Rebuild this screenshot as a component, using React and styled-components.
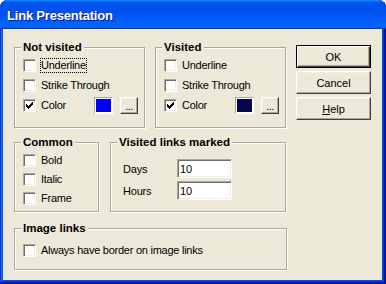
import React from 'react';
import styled, { createGlobalStyle, css } from 'styled-components';

const GlobalStyle = createGlobalStyle`
  html, body { margin: 0; padding: 0; background: #ffffff; }
  body { font-family: "Liberation Sans", Arial, sans-serif; font-size: 11px; color: #000; }
  #root { width: 386px; height: 284px; }
`;

const Window = styled.div`
  width: 386px;
  height: 284px;
  box-sizing: border-box;
  display: flex;
  flex-direction: column;
  border-radius: 8px 8px 0 0;
  overflow: hidden;
  background: #0054e3;
  box-shadow: inset -1px -1px #00138c, inset 1px 1px #0831d9, inset -2px -2px #001ea0,
    inset 2px 2px #166aee, inset -3px -3px #003bda, inset 3px 3px #0855dd;
`;

const TitleBar = styled.div`
  flex: none;
  height: 29px;
  box-sizing: border-box;
  padding: 2px 0 0 7px;
  display: flex;
  align-items: center;
  background: linear-gradient(180deg, #0997ff, #0053ee 8%, #0050ee 40%, #06f 88%, #06f 93%, #005bff 95%, #003dd7 96%, #003dd7);
  color: #fff;
  font-weight: bold;
  font-size: 13px;
  letter-spacing: -0.2px;
  text-shadow: 1px 1px #0f1089;
`;

const Client = styled.div`
  flex: 1;
  margin: 0 4px 4px 3px;
  background: #ece9d8;
  display: flex;
  align-items: flex-start;
  padding: 16px 0 0 11px;
`;

const LeftArea = styled.div`
  display: flex;
  flex-direction: column;
  width: 273px;
  margin-top: 2px;
`;

const Row = styled.div`
  display: flex;
  gap: ${p => p.$gap || 0}px;
  margin-top: ${p => p.$mt || 0}px;
`;

const Group = styled.div`
  position: relative;
  box-sizing: border-box;
  width: ${p => p.$w}px;
  height: ${p => p.$h}px;
  border: 1px solid #aca899;
  box-shadow: inset 1px 1px #fff, 1px 1px #fff;
  padding: ${p => p.$pt}px 6px 0 8px;
`;

const GroupTitle = styled.span`
  position: absolute;
  top: -7px;
  left: 6px;
  padding: 0 2px;
  background: #ece9d8;
  font-weight: bold;
  font-size: 11.5px;
  line-height: 13px;
  white-space: nowrap;
`;

const CheckList = styled.div`
  display: flex;
  flex-direction: column;
  gap: ${p => p.$gap}px;
`;

const CheckRow = styled.div`
  display: flex;
  align-items: center;
  height: 19px;
`;

const Box = styled.span`
  flex: none;
  width: 13px;
  height: 13px;
  box-sizing: border-box;
  border: 1px solid;
  border-color: #aca899 #fff #fff #aca899;
  box-shadow: inset 1px 1px #716f64, inset -1px -1px #f1efe2;
  background: #fff;
  display: flex;
  align-items: center;
  justify-content: center;
`;

const Label = styled.span`
  margin-left: 4px;
  line-height: 13px;
  border: 1px dotted ${p => (p.$focus ? '#000' : 'transparent')};
  letter-spacing: -0.25px;
  white-space: nowrap;
  ${p => p.$grow && css`flex: 1;`}
`;

const Swatch = styled.span`
  flex: none;
  width: 19px;
  height: 17px;
  box-sizing: border-box;
  border: 1px solid;
  border-color: #aca899 #fff #fff #aca899;
  box-shadow: inset 0 0 0 1px #fff;
  background: ${p => p.$color};
`;

const raised = css`
  box-sizing: border-box;
  padding: 0;
  font-family: "Liberation Sans", Arial, sans-serif;
  font-size: 11px;
  color: #000;
  background: #ece9d8;
  border: 1px solid;
  border-color: #fff #404040 #404040 #fff;
  box-shadow: inset -1px -1px #aca899, inset 1px 1px #f1efe2;
`;

const DotsButton = styled.button`
  ${raised};
  flex: none;
  width: 18px;
  height: 17px;
  margin-left: 7px;
  line-height: 13px;
  letter-spacing: -0.5px;
  padding-top: 1px;
`;

const ButtonColumn = styled.div`
  display: flex;
  flex-direction: column;
  gap: 3px;
  margin-left: 9px;
`;

const Button = styled.button`
  ${raised};
  width: 75px;
  height: 23px;
  ${p =>
    p.$default &&
    css`
      border-color: #000;
      box-shadow: inset 1px 1px #fff, inset -1px -1px #404040, inset -2px -2px #aca899;
    `}
`;

const Fields = styled.div`
  display: grid;
  grid-template-columns: 54px 55px;
  row-gap: 3px;
  align-items: center;
  margin-left: 4px;
`;

const FieldLabel = styled.span`
  letter-spacing: -0.2px;
`;

const TextInput = styled.input`
  width: 55px;
  height: 19px;
  box-sizing: border-box;
  border: 1px solid;
  border-color: #aca899 #fff #fff #aca899;
  box-shadow: inset 1px 1px #716f64, inset -1px -1px #f1efe2;
  padding: 0 0 0 2px;
  font-family: "Liberation Sans", Arial, sans-serif;
  font-size: 11px;
  color: #000;
  background: #fff;
  outline: none;
`;

const Check = () => (
  <svg width="7" height="7" viewBox="0 0 7 7" shapeRendering="crispEdges">
    <path d="M0 2h1v1h1v1h1v-1h1v-1h1v-1h1v-1h1v3h-1v1h-1v1h-1v1h-1v1h-1v-1h-1v-1h-1z" fill="#000" />
  </svg>
);

const CheckItem = ({ label, checked, focus, children }) => (
  <CheckRow>
    <Box>{checked && <Check />}</Box>
    <Label $focus={focus} $grow={!!children}>{label}</Label>
    {children}
  </CheckRow>
);

const LinkStateGroup = ({ title, color, focusFirst }) => (
  <Group $w={131} $h={81} $pt={8}>
    <GroupTitle>{title}</GroupTitle>
    <CheckList $gap={1}>
      <CheckItem label="Underline" focus={focusFirst} />
      <CheckItem label="Strike Through" />
      <CheckItem label="Color" checked>
        <Swatch $color={color} />
        <DotsButton>...</DotsButton>
      </CheckItem>
    </CheckList>
  </Group>
);

export default function App() {
  return (
    <>
      <GlobalStyle />
      <Window>
        <TitleBar>Link Presentation</TitleBar>
        <Client>
          <LeftArea>
            <Row $gap={10}>
              <LinkStateGroup title="Not visited" color="#0000f4" focusFirst />
              <LinkStateGroup title="Visited" color="#06064e" />
            </Row>
            <Row $gap={11} $mt={14}>
              <Group $w={85} $h={70} $pt={8}>
                <GroupTitle>Common</GroupTitle>
                <CheckList $gap={0}>
                  <CheckItem label="Bold" />
                  <CheckItem label="Italic" />
                  <CheckItem label="Frame" />
                </CheckList>
              </Group>
              <Group $w={176} $h={70} $pt={16}>
                <GroupTitle>Visited links marked</GroupTitle>
                <Fields>
                  <FieldLabel>Days</FieldLabel>
                  <TextInput defaultValue="10" />
                  <FieldLabel>Hours</FieldLabel>
                  <TextInput defaultValue="10" />
                </Fields>
              </Group>
            </Row>
            <Row $mt={16}>
              <Group $w={273} $h={42} $pt={12}>
                <GroupTitle>Image links</GroupTitle>
                <CheckItem label="Always have border on image links" />
              </Group>
            </Row>
          </LeftArea>
          <ButtonColumn>
            <Button $default>OK</Button>
            <Button>Cancel</Button>
            <Button>
              <u>H</u>elp
            </Button>
          </ButtonColumn>
        </Client>
      </Window>
    </>
  );
}
